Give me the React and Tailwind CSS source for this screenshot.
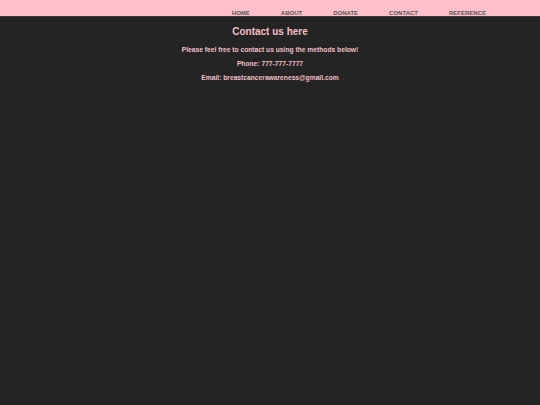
import React from "react";

const links = ["HOME", "ABOUT", "DONATE", "CONTACT", "REFERENCE"];

export default function App() {
  return (
    <div className="min-h-[405px] bg-[#242424] font-['Liberation_Sans',Arial,sans-serif]">
      <nav className="h-[17px] bg-[#ffc0cb] border-b border-[#3a3a3a] flex items-end justify-end pr-[38.5px]">
        {links.map((l) => (
          <a key={l} href="#" className="px-[15.5px] text-[6px] font-bold text-[#555] leading-[6px]">
            {l}
          </a>
        ))}
      </nav>
      <div className="text-center text-[#f4bfc8] font-bold">
        <h1 className="text-[10px] mt-[8px] leading-[14px]">Contact us here</h1>
        <p className="text-[6.7px] mt-[6px] leading-[10px]">Please feel free to contact us using the methods below!</p>
        <p className="text-[6.7px] mt-[3.5px] leading-[10px]">Phone: 777-777-7777</p>
        <p className="text-[6.7px] mt-[4.5px] leading-[10px]">Email: breastcancerawareness@gmail.com</p>
      </div>
    </div>
  );
}
